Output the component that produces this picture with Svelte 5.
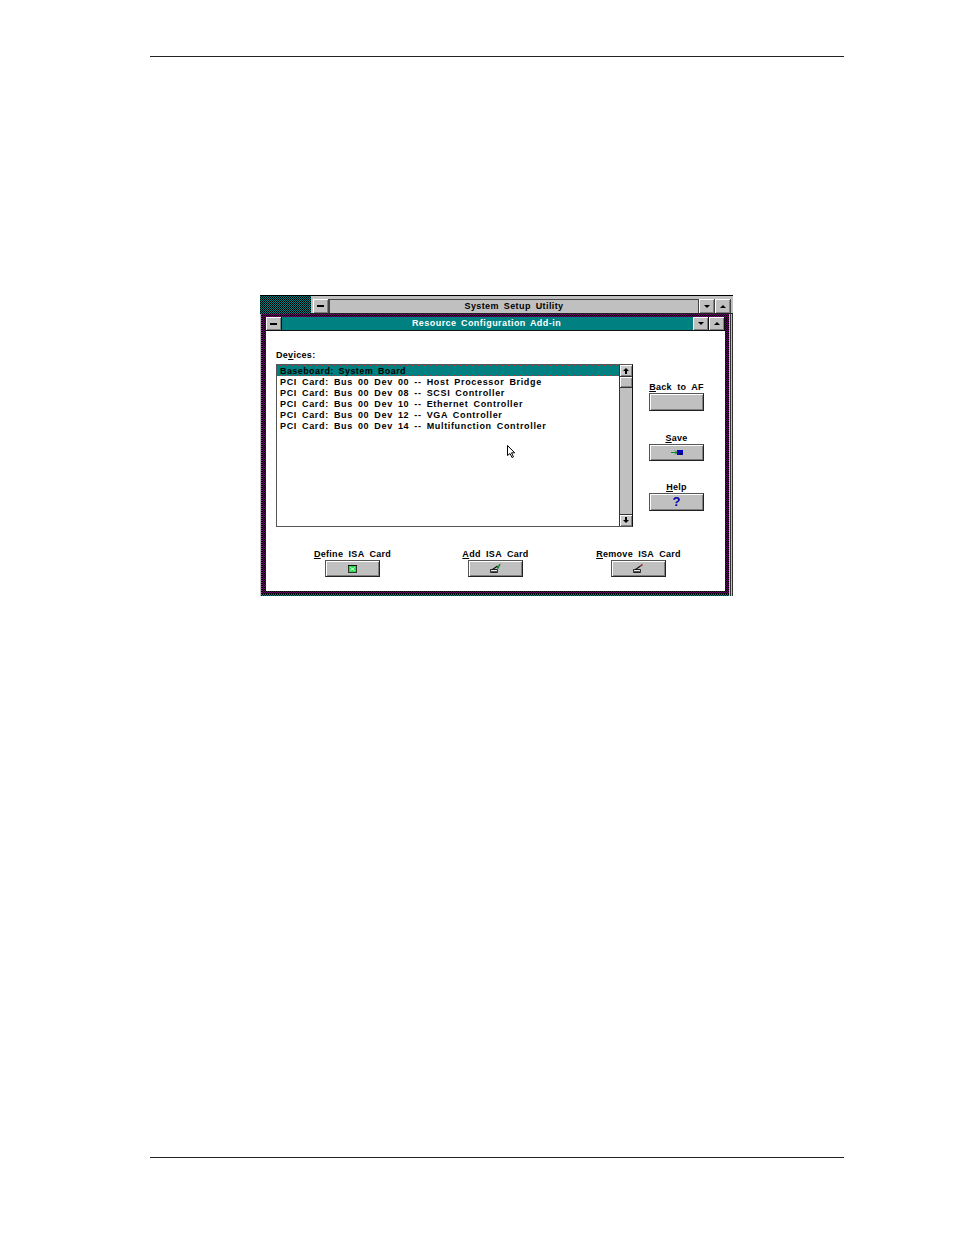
<script>
	const devices = [
		'PCI Card: Bus 00 Dev 00 -- Host Processor Bridge',
		'PCI Card: Bus 00 Dev 08 -- SCSI Controller',
		'PCI Card: Bus 00 Dev 10 -- Ethernet Controller',
		'PCI Card: Bus 00 Dev 12 -- VGA Controller',
		'PCI Card: Bus 00 Dev 14 -- Multifunction Controller'
	];
</script>

{#snippet pencil(tip, tipPath)}
	<svg width="11" height="9" viewBox="0 0 11 9">
		<path d="M0.5 5.5h7v3h-7z" fill="#eee" stroke="#222" stroke-width="1" />
		<path d="M0.5 7.5h7" stroke="#555" stroke-width="1" />
		<path d="M2.5 5.5l5-3.5" stroke="#111" stroke-width="1.1" fill="none" />
		<path d={tipPath} stroke={tip} stroke-width="1.5" fill="none" />
	</svg>
{/snippet}

<div class="page">
	<div class="rule"></div>

	<div class="outer">
		<div class="outer-top">
			<div class="desktop"></div>
			<div class="outer-bar">
				<div class="ctl"><span class="dash"></span></div>
				<div class="outer-title">System Setup Utility</div>
				<div class="ctl wide"><span class="down"></span></div>
				<div class="ctl wide"><span class="up"></span></div>
			</div>
		</div>

		<div class="outer-body">
			<div class="frame">
				<div class="inner">
					<div class="inner-bar">
						<div class="ctl"><span class="dash"></span></div>
						<div class="inner-title">Resource Configuration Add-in</div>
						<div class="ctl"><span class="down"></span></div>
						<div class="ctl"><span class="up"></span></div>
					</div>

					<div class="client">
						<div class="label devices">De<u>v</u>ices:</div>

						<div class="middle">
							<div class="listbox">
								<div class="rows">
									<div class="row selected">Baseboard: System Board</div>
									{#each devices as d}
										<div class="row">{d}</div>
									{/each}
								</div>
								<div class="scrollbar">
									<div class="sb-btn"><span class="arrow-up"></span></div>
									<div class="sb-thumb"></div>
									<div class="sb-track"></div>
									<div class="sb-btn"><span class="arrow-down"></span></div>
								</div>
							</div>

							<div class="side">
								<div class="action">
									<div class="label"><u>B</u>ack to AF</div>
									<button class="btn tall"></button>
								</div>
								<div class="action">
									<div class="label"><u>S</u>ave</div>
									<button class="btn">
										<svg width="12" height="7" viewBox="0 0 12 7">
											<path d="M0 3.5h6" stroke="#0a8a2a" stroke-width="1" />
											<path d="M4 1.5l2 2-2 2" stroke="#0a8a2a" stroke-width="1" fill="none" />
											<rect x="6" y="1" width="6" height="5" fill="#0000c8" />
											<rect x="8" y="4" width="3" height="2" fill="#112" />
										</svg>
									</button>
								</div>
								<div class="action help">
									<div class="label"><u>H</u>elp</div>
									<button class="btn tall"><span class="q">?</span></button>
								</div>
							</div>
						</div>

						<div class="bottom">
							<div class="action">
								<div class="label"><u>D</u>efine ISA Card</div>
								<button class="btn">
									<svg width="9" height="8" viewBox="0 0 9 8">
										<rect x="0.5" y="0.5" width="8" height="7" fill="#20e048" stroke="#333" />
										<rect x="0" y="0" width="9" height="1" fill="#111" />
										<path d="M2.5 2.5l4 3M6.5 2.5l-4 3" stroke="#f2fff2" stroke-width="1" />
									</svg>
								</button>
							</div>
							<div class="action">
								<div class="label"><u>A</u>dd ISA Card</div>
								<button class="btn">{@render pencil('#0a8a2a', 'M7 3l1 1 2-4')}</button>
							</div>
							<div class="action">
								<div class="label"><u>R</u>emove ISA Card</div>
								<button class="btn">{@render pencil('#a01818', 'M7.5 2l2-1.5')}</button>
							</div>
						</div>

						<svg class="cursor" width="9" height="13" viewBox="0 0 9 13">
							<path d="M0.5 0.5v10l2.5-2 2 4 1.5-.7-2-4h3.2z" fill="#fff" stroke="#000" stroke-width="1" />
						</svg>
					</div>
				</div>
			</div>
			<div class="outer-edge"></div>
		</div>
	</div>

	<div class="spacer"></div>
	<div class="rule"></div>
</div>

<style>
	:global(body) {
		margin: 0;
		background: #fff;
	}

	.page {
		width: 954px;
		height: 1235px;
		box-sizing: border-box;
		padding-top: 56px;
		font-family: 'Liberation Sans', Arial, sans-serif;
		font-size: 9px;
		font-weight: 700;
		color: #000;
		display: flex;
		flex-direction: column;
	}

	.rule {
		height: 1px;
		margin-left: 150px;
		width: 694px;
		background: #222;
		flex: none;
	}

	.spacer {
		height: 561px;
		flex: none;
	}

	.outer {
		margin: 238px 0 0 260px;
		width: 473px;
		height: 301px;
		box-sizing: border-box;
		background: #c0c0c0;
		border-top: 1px solid #000;
		display: flex;
		flex-direction: column;
		flex: none;
		position: relative;
	}

	.outer-top {
		display: flex;
		height: 18px;
		flex: none;
	}

	.desktop {
		width: 51px;
		background: repeating-conic-gradient(#000 0 25%, #008080 0 50%) 0 0 / 2px 2px;
	}

	.outer-bar {
		flex: 1;
		display: flex;
		align-items: stretch;
		padding: 3px 2px 0 2px;
		background: #c0c0c0;
		border-bottom: 1px solid #222;
	}

	.outer-title {
		flex: 1;
		text-align: center;
		color: #000;
		font-size: 9px;
		line-height: 13px;
		letter-spacing: 0.4px;
		word-spacing: 2px;
		border-left: 1px solid #444;
		border-right: 1px solid #444;
		border-top: 1px solid #444;
		padding-left: 0;
	}

	.ctl {
		width: 15px;
		background: #c0c0c0;
		box-shadow: inset 1px 1px 0 #fff, inset -1px -1px 0 #808080;
		border-right: 1px solid #444;
		display: flex;
		align-items: center;
		justify-content: center;
		flex: none;
	}

	.dash {
		width: 7px;
		height: 2px;
		background: #000;
	}

	.down,
	.up {
		width: 0;
		height: 0;
		border-left: 3px solid transparent;
		border-right: 3px solid transparent;
	}

	.down {
		border-top: 3px solid #000;
	}

	.up {
		border-bottom: 3px solid #000;
	}

	.outer-body {
		flex: 1;
		display: flex;
		min-height: 0;
	}

	.frame {
		width: 468px;
		margin-left: 1px;
		box-sizing: border-box;
		padding: 0 0 2px 1px;
		background: repeating-conic-gradient(#000 0 25%, #008080 0 50%) 0 0 / 2px 2px;
		display: flex;
	}

	.inner {
		flex: 1;
		box-sizing: border-box;
		padding: 3px 4px 3px 4px;
		background: repeating-conic-gradient(#000 0 25%, #6a006a 0 50%) 0 0 / 2px 2px;
		display: flex;
		flex-direction: column;
	}

	.inner-bar {
		display: flex;
		height: 13px;
		background: #008080;
		border-bottom: 1px solid #111;
		flex: none;
	}

	.inner-bar .ctl {
		border-right: 1px solid #111;
		width: 15px;
	}

	.inner-title {
		flex: 1;
		text-align: center;
		color: #fff;
		line-height: 12px;
		font-weight: 700;
		letter-spacing: 0.45px;
		word-spacing: 1.5px;
		padding-right: 2px;
	}

	.client {
		flex: 1;
		background: #fff;
		padding: 19px 20px 0 10px;
		position: relative;
		display: flex;
		flex-direction: column;
	}

	.label {
		line-height: 11px;
		letter-spacing: 0.3px;
		word-spacing: 2.5px;
		white-space: nowrap;
		text-align: center;
	}

	.label u {
		text-underline-offset: 1px;
	}

	.devices {
		text-align: left;
		margin-bottom: 3px;
	}

	.middle {
		display: flex;
		gap: 16px;
	}

	.listbox {
		width: 357px;
		height: 163px;
		box-sizing: border-box;
		display: flex;
		border: 1px solid #555;
		border-right: 1px solid #111;
		border-bottom: 1px solid #555;
		background: #fff;
	}

	.rows {
		flex: 1;
		min-width: 0;
	}

	.row {
		height: 11px;
		box-sizing: border-box;
		padding: 1px 0 0 3px;
		line-height: 11px;
		letter-spacing: 0.66px;
		word-spacing: 1.9px;
		white-space: nowrap;
	}

	.selected {
		letter-spacing: 0.42px;
		background:
			repeating-linear-gradient(90deg, #c03030 0 1px, transparent 1px 3px) 0 0 / 100% 1px no-repeat,
			repeating-linear-gradient(90deg, #c03030 0 1px, transparent 1px 3px) 0 100% / 100% 1px no-repeat,
			repeating-linear-gradient(0deg, #c03030 0 1px, transparent 1px 3px) 0 0 / 1px 100% no-repeat,
			#008080;
	}

	.scrollbar {
		width: 12px;
		display: flex;
		flex-direction: column;
		border-left: 1px solid #333;
		background: #c0c0c0;
		flex: none;
	}

	.sb-btn {
		height: 11px;
		background: #c8c8c8;
		box-shadow: inset 1px 1px 0 #fff, inset -1px -1px 0 #808080;
		display: flex;
		align-items: center;
		justify-content: center;
		flex: none;
	}

	.sb-thumb {
		height: 10px;
		background: #c0c0c0;
		box-shadow: inset 1px 1px 0 #fff, inset -1px -1px 0 #808080;
		border-top: 1px solid #333;
		border-bottom: 1px solid #333;
		flex: none;
	}

	.sb-track {
		flex: 1;
		border-bottom: 1px solid #333;
	}

	.arrow-up,
	.arrow-down {
		width: 0;
		height: 0;
		border-left: 3px solid transparent;
		border-right: 3px solid transparent;
		position: relative;
	}

	.arrow-up {
		border-bottom: 3px solid #000;
		margin-top: -2px;
	}

	.arrow-up::after,
	.arrow-down::after {
		content: '';
		position: absolute;
		left: -1px;
		width: 2px;
		height: 3px;
		background: #000;
	}

	.arrow-up::after {
		top: 3px;
	}

	.arrow-down {
		border-top: 3px solid #000;
		margin-top: 2px;
	}

	.arrow-down::after {
		top: -6px;
	}

	.side {
		width: 55px;
		padding-top: 18px;
		display: flex;
		flex-direction: column;
		gap: 22px;
	}

	.action {
		display: flex;
		flex-direction: column;
		align-items: center;
		width: 55px;
	}

	.help {
		margin-top: -1px;
	}

	.btn {
		width: 55px;
		height: 17px;
		box-sizing: border-box;
		padding: 0;
		background: #c0c0c0;
		border: 1px solid #222;
		border-top-color: #555;
		border-left-color: #555;
		box-shadow: inset 1px 1px 0 #fff, inset -1px -1px 0 #808080;
		display: flex;
		align-items: center;
		justify-content: center;
	}

	.tall {
		height: 18px;
	}

	.q {
		color: #0000a8;
		font: 700 13px 'Liberation Sans', Arial, sans-serif;
		line-height: 14px;
	}

	.bottom {
		display: flex;
		margin-top: 22px;
		padding-left: 49px;
		gap: 88px;
	}

	.cursor {
		position: absolute;
		left: 241px;
		top: 114px;
	}

	.outer-edge {
		flex: 1;
		border-left: 1px solid #333;
		border-right: 1px solid #333;
		margin-left: 1px;
	}
</style>
